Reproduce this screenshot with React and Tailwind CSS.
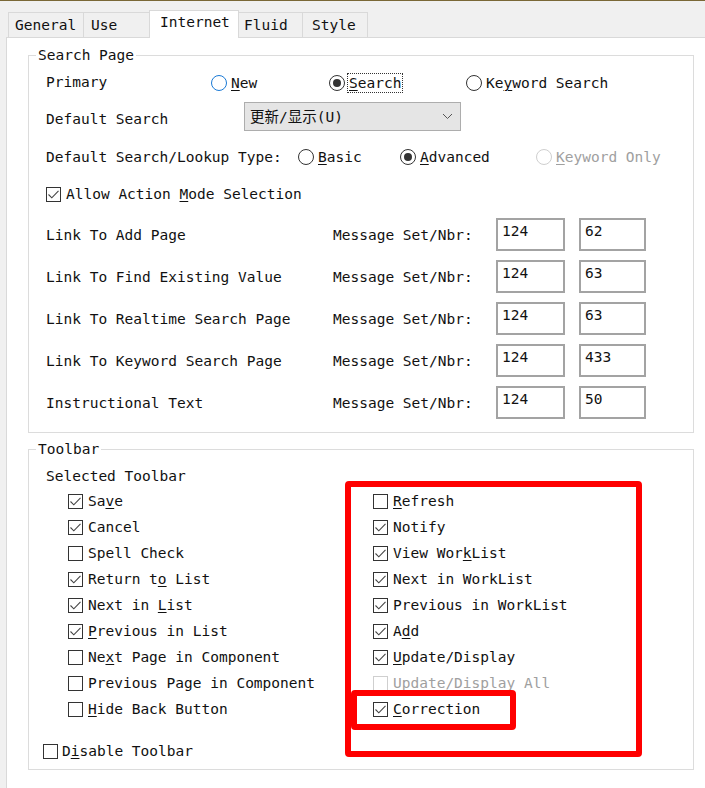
import React from "react";

function U({ children }) {
  return <span className="underline underline-offset-[2px] decoration-[1px]">{children}</span>;
}

function Check({ checked, disabled }) {
  return (
    <span
      className={
        "w-[15px] h-[15px] shrink-0 border bg-white flex items-center justify-center " +
        (disabled ? "border-[#cfcfcf]" : "border-[#333333]")
      }
    >
      {checked && (
        <svg width="13" height="13" viewBox="0 0 13 13">
          <path d="M1.5 6.5 L4.8 9.8 L11.5 2.8" stroke="#444444" strokeWidth="1.1" fill="none" />
        </svg>
      )}
    </span>
  );
}

function Radio({ checked, disabled, hover }) {
  const border = disabled ? "border-[#cfcfcf]" : hover ? "border-[#1a7ad6]" : "border-[#333333]";
  return (
    <span className={"w-[16px] h-[16px] shrink-0 rounded-full border bg-white flex items-center justify-center " + border}>
      {checked && <span className="w-[8px] h-[8px] rounded-full bg-[#333333]" />}
    </span>
  );
}

function Tab({ w, pl, selected, children }) {
  if (selected) {
    return (
      <div
        className="relative z-10 -mb-px -ml-px h-[28px] bg-white border border-b-0 border-[#d9d9d9] pt-[2px]"
        style={{ width: w, paddingLeft: pl }}
      >
        {children}
      </div>
    );
  }
  return (
    <div
      className="-ml-px first:ml-0 h-[25px] bg-[#f0f0f0] border border-b-0 border-[#d9d9d9] flex items-center"
      style={{ width: w, paddingLeft: pl }}
    >
      {children}
    </div>
  );
}

function LinkRow({ label, a, b }) {
  return (
    <div className="h-[33px] flex items-center">
      <span className="w-[287px]">{label}</span>
      <span className="w-[163px]">Message Set/Nbr:</span>
      <div className="w-[69px] h-[33px] border-2 border-[#a3a3a3] bg-white pl-[4px] pt-[2px]">{a}</div>
      <div className="ml-[14px] w-[67px] h-[33px] border-2 border-[#a3a3a3] bg-white pl-[4px] pt-[2px]">{b}</div>
    </div>
  );
}

function CRow({ checked, disabled, children }) {
  return (
    <div className="h-[26px] flex items-center gap-[5px]">
      <Check checked={checked} disabled={disabled} />
      <span className={disabled ? "text-[#a0a0a0]" : ""}>{children}</span>
    </div>
  );
}

export default function App() {
  return (
    <div className="relative w-[705px] h-[788px] overflow-hidden bg-[#f0f0f0] border-t border-[#7a6836] flex flex-col font-['DejaVu_Sans_Mono','Noto_Sans_CJK_SC',monospace] text-[14.5px] leading-[18px] text-[#111111]">
      {/* tabs */}
      <div className="h-[36px] pl-[8px] flex items-end shrink-0">
        <Tab w={76} pl={6}>General</Tab>
        <Tab w={67} pl={7}>Use</Tab>
        <Tab w={90} pl={10} selected>Internet</Tab>
        <Tab w={65} pl={5}>Fluid</Tab>
        <Tab w={66} pl={9}>Style</Tab>
      </div>

      {/* panel */}
      <div className="flex-1 ml-[6px] bg-white border-l border-t border-[#d9d9d9] pl-[21px]">
        <fieldset className="mt-[8px] w-[666px] border border-[#dcdcdc] m-0 p-0 min-w-0">
          <legend className="ml-[7px] px-[2px] leading-[18px]">Search Page</legend>
          <div className="pl-[17px] pb-[13px]">
            <div className="h-[38px] flex items-center">
              <span className="w-[165px] -mt-[3px]">Primary</span>
              <div className="w-[118px] flex items-center gap-[4px]">
                <Radio hover />
                <span>
                  <U>N</U>ew
                </span>
              </div>
              <div className="w-[137px] flex items-center gap-[2px]">
                <Radio checked />
                <span className="border border-dotted border-[#333333] px-[1px]">
                  <U>S</U>earch
                </span>
              </div>
              <div className="flex items-center gap-[4px]">
                <Radio />
                <span>
                  Ke<U>y</U>word Search
                </span>
              </div>
            </div>

            <div className="h-[29px] flex items-center">
              <span className="w-[198px] pt-[4px]">Default Search</span>
              <div className="w-[217px] h-[29px] bg-[#e5e5e5] border border-[#adadad] flex items-center justify-between pl-[5px] pr-[7px]">
                <span>更新/显示(U)</span>
                <svg width="11" height="7" viewBox="0 0 11 7">
                  <path d="M1 1 L5.5 5.5 L10 1" stroke="#555555" strokeWidth="1" fill="none" />
                </svg>
              </div>
            </div>

            <div className="h-[52px] flex items-center">
              <span className="w-[252px]">Default Search/Lookup Type:</span>
              <div className="w-[102px] flex items-center gap-[4px]">
                <Radio />
                <span>
                  <U>B</U>asic
                </span>
              </div>
              <div className="w-[136px] flex items-center gap-[4px]">
                <Radio checked />
                <span>
                  <U>A</U>dvanced
                </span>
              </div>
              <div className="flex items-center gap-[4px] text-[#a0a0a0]">
                <Radio disabled />
                <span>
                  <U>K</U>eyword Only
                </span>
              </div>
            </div>

            <div className="h-[22px] flex items-center gap-[5px]">
              <Check checked />
              <span>
                Allow Action <U>M</U>ode Selection
              </span>
            </div>

            <div className="mt-[13px] flex flex-col gap-[9px]">
              <LinkRow label="Link To Add Page" a="124" b="62" />
              <LinkRow label="Link To Find Existing Value" a="124" b="63" />
              <LinkRow label="Link To Realtime Search Page" a="124" b="63" />
              <LinkRow label="Link To Keyword Search Page" a="124" b="433" />
              <LinkRow label="Instructional Text" a="124" b="50" />
            </div>
          </div>
        </fieldset>

        <fieldset className="mt-[7px] w-[666px] border border-[#dcdcdc] m-0 p-0 min-w-0">
          <legend className="ml-[7px] px-[2px] leading-[18px]">Toolbar</legend>
          <div className="pb-[5px]">
            <div className="h-[30px] pt-[9px] pl-[17px]">Selected Toolbar</div>
            <div className="grid grid-cols-[305px_1fr] pl-[39px]">
              <div className="flex flex-col">
                <CRow checked>
                  Sa<U>v</U>e
                </CRow>
                <CRow checked>Cancel</CRow>
                <CRow>Spell Check</CRow>
                <CRow checked>
                  Return t<U>o</U> List
                </CRow>
                <CRow checked>
                  Next in <U>L</U>ist
                </CRow>
                <CRow checked>
                  <U>P</U>revious in List
                </CRow>
                <CRow>
                  Ne<U>x</U>t Page in Component
                </CRow>
                <CRow>Previous Page in Component</CRow>
                <CRow>
                  <U>H</U>ide Back Button
                </CRow>
              </div>
              <div className="flex flex-col">
                <CRow>
                  <U>R</U>efresh
                </CRow>
                <CRow checked>Notify</CRow>
                <CRow checked>
                  View Wor<U>k</U>List
                </CRow>
                <CRow checked>Next in WorkList</CRow>
                <CRow checked>Previous in WorkList</CRow>
                <CRow checked>
                  A<U>d</U>d
                </CRow>
                <CRow checked>
                  <U>U</U>pdate/Display
                </CRow>
                <CRow disabled>Update/Display All</CRow>
                <CRow checked>
                  <U>C</U>orrection
                </CRow>
              </div>
            </div>
            <div className="mt-[16px] h-[26px] pl-[14px] flex items-center gap-[4px]">
              <Check />
              <span>
                D<U>i</U>sable Toolbar
              </span>
            </div>
          </div>
        </fieldset>
      </div>

      {/* red annotation boxes */}
      <div className="absolute left-[345px] top-[480px] w-[297px] h-[276px] border-[6px] border-[#ff0000] rounded-[4px] pointer-events-none" />
      <div className="absolute left-[351px] top-[689px] w-[165px] h-[40px] border-[6px] border-[#ff0000] rounded-[4px] pointer-events-none" />
    </div>
  );
}
